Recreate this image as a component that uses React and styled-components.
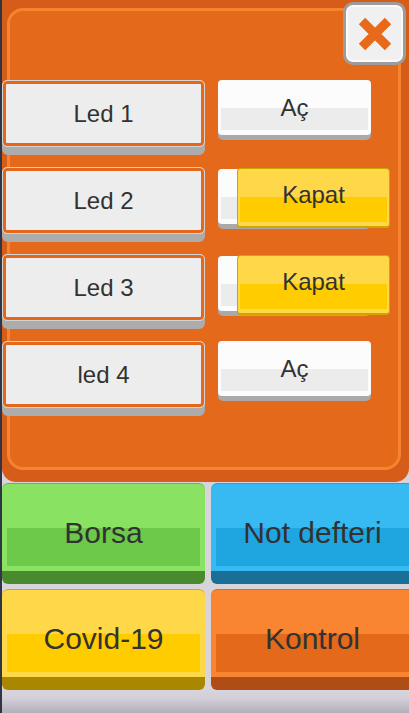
import React from "react";
import styled, { createGlobalStyle } from "styled-components";

const Global = createGlobalStyle`
  html, body { margin: 0; padding: 0; background: #2f3542; }
  * { box-sizing: border-box; }
`;

const Screen = styled.div`
  width: 409px;
  height: 713px;
  overflow: hidden;
  border-left: 2px solid #2f3542;
  background: #d8d4dc;
  display: flex;
  flex-direction: column;
  font-family: "Liberation Sans", Arial, sans-serif;
  color: #323232;
`;

const Panel = styled.div`
  position: relative;
  flex: 0 0 482px;
  background: #d65d19;
  border-radius: 0 0 14px 14px;
  padding-top: 80px;

  &::before {
    content: "";
    position: absolute;
    top: 8px;
    left: 5px;
    right: 8px;
    bottom: 12px;
    border: 3px solid #f8832f;
    border-radius: 16px;
    background: #e5691a;
  }
`;

const CloseButton = styled.button`
  position: absolute;
  top: 2px;
  right: 3px;
  width: 63px;
  height: 63px;
  padding: 0;
  border: 3px solid #9c9c9c;
  border-radius: 10px;
  background: #f0f0f0;
  box-shadow: inset 0 0 0 2px #fafafa;
  display: flex;
  align-items: center;
  justify-content: center;
  z-index: 2;
`;

const Rows = styled.div`
  position: relative;
  z-index: 1;
  display: flex;
  flex-direction: column;
  gap: 12px;
`;

const Row = styled.div`
  display: grid;
  grid-template-columns: 203px 153px;
  column-gap: 13px;
  align-items: start;
`;

const LabelKey = styled.div`
  height: 75px;
  padding-bottom: 8px;
  border-radius: 6px;
  background: #acacac;
`;

const LabelFace = styled.div`
  height: 67px;
  border: 1px solid #d4d4d4;
  border-radius: 5px;
  background: #ededed;
  box-shadow: inset 0 0 0 3px #e5681a;
  display: flex;
  align-items: center;
  justify-content: center;
  font-size: 24px;
`;

const ToggleKey = styled.div`
  position: relative;
  height: 60px;
  padding-bottom: 5px;
  border-radius: 5px;
  background: #a9a9a9;
  margin-top: ${(p) => (p.$on ? "2px" : "0")};
`;

const ToggleFace = styled.div`
  height: 55px;
  border-radius: 4px;
  background: linear-gradient(#ececec, #ececec) no-repeat 3px 28px / calc(100% - 6px) 22px,
    #fcfcfc;
  display: flex;
  align-items: center;
  justify-content: center;
  font-size: 24px;
`;

const OnBadge = styled.div`
  position: absolute;
  top: -1px;
  left: 19px;
  width: 153px;
  height: 60px;
  border: 1px solid #cfa500;
  border-bottom-width: 2px;
  border-radius: 4px;
  background: linear-gradient(#ffcc00, #ffcc00) no-repeat 2px 28px / calc(100% - 4px) 25px,
    #ffd84a;
  display: flex;
  align-items: center;
  justify-content: center;
  padding-bottom: 6px;
  font-size: 24px;
`;

const Tiles = styled.div`
  margin-top: 1px;
  display: grid;
  grid-template-columns: 203px 203px;
  grid-auto-rows: 101px;
  gap: 5px 6px;
`;

const tileColors = {
  green: { top: "#89e261", low: "#6cc94a", ledge: "#4a8a2e", edge: "#62b844" },
  blue: { top: "#37b9f2", low: "#1fa6e0", ledge: "#196f96", edge: "#2a9fd4" },
  yellow: { top: "#ffd84a", low: "#ffcc00", ledge: "#a98700", edge: "#d6aa00" },
  orange: { top: "#f98432", low: "#e5691a", ledge: "#ae4d15", edge: "#e06a1e" },
};

const Tile = styled.div`
  border-radius: 6px;
  background:
    linear-gradient(${(p) => tileColors[p.$c].low}, ${(p) => tileColors[p.$c].low}) no-repeat 5px 45px / calc(100% - 10px) 38px,
    linear-gradient(${(p) => tileColors[p.$c].top}, ${(p) => tileColors[p.$c].top}) no-repeat 0 0 / 100% 88px,
    ${(p) => tileColors[p.$c].ledge};
  box-shadow: inset 0 1px 0 ${(p) => tileColors[p.$c].edge};
  display: flex;
  align-items: center;
  justify-content: center;
  padding-bottom: 2px;
  font-size: 30px;
`;

const Footer = styled.div`
  flex: 1;
  background: linear-gradient(#d8d4de 0%, #d4d0da 35%, #b3afb8 100%);
`;

const leds = [
  { name: "Led 1", on: false },
  { name: "Led 2", on: true },
  { name: "Led 3", on: true },
  { name: "led 4", on: false },
];

function CloseIcon() {
  return (
    <svg width="34" height="34" viewBox="0 0 34 34">
      <path d="M4 4 L30 30 M30 4 L4 30" stroke="#e8691a" strokeWidth="9" fill="none" />
    </svg>
  );
}

export default function App() {
  return (
    <>
      <Global />
      <Screen>
        <Panel>
          <CloseButton aria-label="Kapat">
            <CloseIcon />
          </CloseButton>
          <Rows>
            {leds.map((l) => (
              <Row key={l.name}>
                <LabelKey>
                  <LabelFace>{l.name}</LabelFace>
                </LabelKey>
                <ToggleKey $on={l.on}>
                  <ToggleFace>{l.on ? "" : "Aç"}</ToggleFace>
                  {l.on && <OnBadge>Kapat</OnBadge>}
                </ToggleKey>
              </Row>
            ))}
          </Rows>
        </Panel>
        <Tiles>
          <Tile $c="green">Borsa</Tile>
          <Tile $c="blue">Not defteri</Tile>
          <Tile $c="yellow">Covid-19</Tile>
          <Tile $c="orange">Kontrol</Tile>
        </Tiles>
        <Footer />
      </Screen>
    </>
  );
}
